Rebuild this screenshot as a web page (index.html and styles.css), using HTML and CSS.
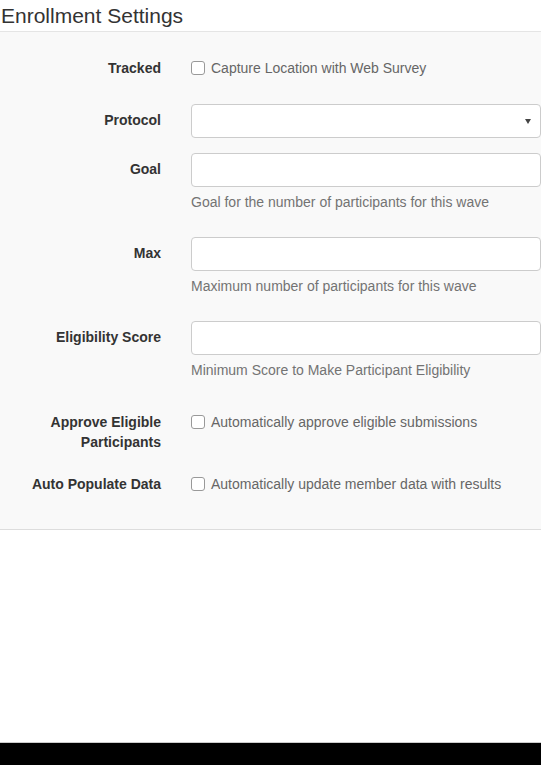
FILE: index.html
```html
<!DOCTYPE html>
<html>
<head>
<meta charset="utf-8">
<link rel="stylesheet" href="styles.css">
</head>
<body>
<div class="page">
  <h3 class="title">Enrollment Settings</h3>
  <div class="panel">
    <form class="form">
      <div class="row row-check first">
        <div class="label">Tracked</div>
        <div class="control check"><span class="box"></span><span>Capture Location with Web Survey</span></div>
      </div>
      <div class="row">
        <div class="label pad">Protocol</div>
        <div class="control"><div class="select"><span class="caret"></span></div></div>
      </div>
      <div class="row">
        <div class="label pad">Goal</div>
        <div class="control"><div class="input"></div><div class="help">Goal for the number of participants for this wave</div></div>
      </div>
      <div class="row">
        <div class="label pad">Max</div>
        <div class="control"><div class="input"></div><div class="help">Maximum number of participants for this wave</div></div>
      </div>
      <div class="row">
        <div class="label pad">Eligibility Score</div>
        <div class="control"><div class="input"></div><div class="help">Minimum Score to Make Participant Eligibility</div></div>
      </div>
      <div class="row row-check">
        <div class="label">Approve Eligible Participants</div>
        <div class="control check"><span class="box"></span><span>Automatically approve eligible submissions</span></div>
      </div>
      <div class="row row-check last">
        <div class="label">Auto Populate Data</div>
        <div class="control check"><span class="box"></span><span>Automatically update member data with results</span></div>
      </div>
    </form>
  </div>
  <div class="spacer"></div>
  <div class="footer"></div>
</div>
</body>
</html>
```
FILE: styles.css
```css
html, body {
  margin: 0;
  padding: 0;
  background: #fff;
}
body {
  font-family: "Liberation Sans", Arial, sans-serif;
  font-size: 14px;
  line-height: 20px;
  color: #333;
}
.page {
  display: flex;
  flex-direction: column;
  min-height: 765px;
}
.title {
  margin: 0;
  font-size: 21px;
  font-weight: normal;
  line-height: 31px;
  height: 31px;
  padding-left: 1px;
  color: #333;
  border-bottom: 1px solid #e5e5e5;
}
.panel {
  background: #f9f9f9;
  border-bottom: 1px solid #ddd;
  padding: 19px 0 35px;
}
.form {
  margin: 0;
}
.row {
  display: grid;
  grid-template-columns: 161px 350px;
  column-gap: 30px;
  margin-bottom: 15px;
}
.row-check.first {
  margin-bottom: 26px;
}
.row.last {
  margin-bottom: 0;
}
.label {
  text-align: right;
  font-weight: bold;
  color: #333;
  padding-top: 7px;
}
.label.pad {
  padding-top: 6px;
}
.control {
  min-width: 0;
}
.check {
  display: flex;
  align-items: flex-start;
  gap: 6px;
  padding-top: 7px;
  color: #666;
}
.box {
  flex: none;
  width: 12px;
  height: 12px;
  margin-top: 3px;
  border: 1px solid #999;
  border-radius: 3px;
  background: #fff;
}
.select, .input {
  box-sizing: border-box;
  height: 34px;
  background: #fff;
  border: 1px solid #ccc;
  border-radius: 4px;
}
.select {
  display: flex;
  align-items: center;
  justify-content: flex-end;
  padding-right: 9px;
}
.caret {
  width: 0;
  height: 0;
  border-left: 3px solid transparent;
  border-right: 3px solid transparent;
  border-top: 5px solid #444;
}
.help {
  margin: 5px 0 10px;
  color: #737373;
}
.spacer {
  flex: 1;
}
.footer {
  height: 22px;
  background: #000;
  border-top: 1px solid #ccc;
}
```
